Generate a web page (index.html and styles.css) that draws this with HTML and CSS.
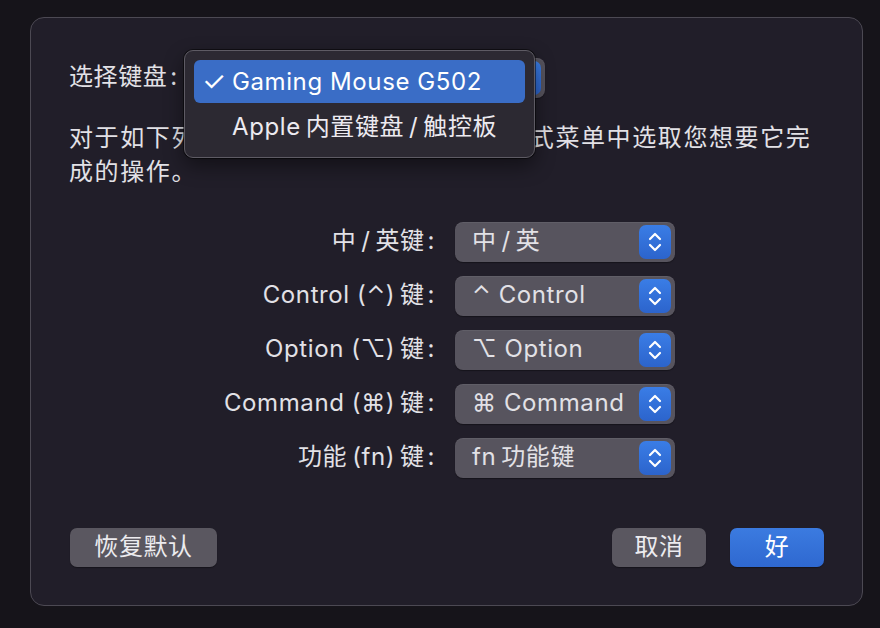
FILE: index.html
```html
<!DOCTYPE html>
<html lang="zh-CN">
<head>
    <meta charset="UTF-8">
    <meta name="viewport" content="width=device-width, initial-scale=1.0">
    <title>修饰键</title>
    <link rel="stylesheet" href="styles.css">
</head>
<body>

    <div class="dialog">
        <!-- 选择键盘 -->
        <div class="keyboard-row">
            <span class="keyboard-label">选择键盘&#8202;:</span>
            <div class="popup popup-wide">
                <span>Gaming Mouse G502</span>
                <span class="stepper">
                    <svg width="32" height="34" viewBox="0 0 32 34"><path d="M11 14 L16 9 L21 14 M11 20 L16 25 L21 20" fill="none" stroke="#fff" stroke-width="2.2" stroke-linecap="round" stroke-linejoin="round"/></svg>
                </span>
            </div>

            <!-- 弹出菜单 -->
            <div class="menu">
                <div class="menu-item selected"><span class="check">✓</span>Gaming Mouse G502</div>
                <div class="menu-item"><span class="check"></span>Apple&#8201;内置键盘&#8201;/&#8201;触控板</div>
            </div>
        </div>

        <p class="intro">对于如下列每个修饰键，请从旁边的弹出式菜单中选取您想要它完成的操作。</p>

        <!-- 修饰键列表 -->
        <div class="keys">
            <label>中&#8201;/&#8201;英键&#8202;:</label>
            <div class="popup"><span>中&#8201;/&#8201;英</span><span class="stepper"><svg width="32" height="34" viewBox="0 0 32 34"><path d="M11 14 L16 9 L21 14 M11 20 L16 25 L21 20" fill="none" stroke="#fff" stroke-width="2.2" stroke-linecap="round" stroke-linejoin="round"/></svg></span></div>

            <label>Control (⌃)&#8201;键&#8202;:</label>
            <div class="popup"><span>⌃ Control</span><span class="stepper"><svg width="32" height="34" viewBox="0 0 32 34"><path d="M11 14 L16 9 L21 14 M11 20 L16 25 L21 20" fill="none" stroke="#fff" stroke-width="2.2" stroke-linecap="round" stroke-linejoin="round"/></svg></span></div>

            <label>Option (⌥)&#8201;键&#8202;:</label>
            <div class="popup"><span>⌥ Option</span><span class="stepper"><svg width="32" height="34" viewBox="0 0 32 34"><path d="M11 14 L16 9 L21 14 M11 20 L16 25 L21 20" fill="none" stroke="#fff" stroke-width="2.2" stroke-linecap="round" stroke-linejoin="round"/></svg></span></div>

            <label>Command (⌘)&#8201;键&#8202;:</label>
            <div class="popup"><span>⌘ Command</span><span class="stepper"><svg width="32" height="34" viewBox="0 0 32 34"><path d="M11 14 L16 9 L21 14 M11 20 L16 25 L21 20" fill="none" stroke="#fff" stroke-width="2.2" stroke-linecap="round" stroke-linejoin="round"/></svg></span></div>

            <label>功能&#8201;(fn)&#8201;键&#8202;:</label>
            <div class="popup"><span>fn&#8201;功能键</span><span class="stepper"><svg width="32" height="34" viewBox="0 0 32 34"><path d="M11 14 L16 9 L21 14 M11 20 L16 25 L21 20" fill="none" stroke="#fff" stroke-width="2.2" stroke-linecap="round" stroke-linejoin="round"/></svg></span></div>
        </div>

        <!-- 按钮 -->
        <div class="actions">
            <button class="btn btn-restore">恢复默认</button>
            <div class="actions-right">
                <button class="btn">取消</button>
                <button class="btn btn-primary">好</button>
            </div>
        </div>
    </div>

</body>
</html>
```

FILE: styles.css
```css
body {
    margin: 0;
    background-color: #16141a;
    font-family: "Inter", "Noto Sans CJK SC", "DejaVu Sans", sans-serif;
    font-size: 24px;
    letter-spacing: 0.6px;
    color: #e2e1e6;
    height: 628px;
    overflow: hidden;
}
.dialog {
    box-sizing: border-box;
    width: 833px;
    height: 589px;
    margin: 17px 0 0 30px;
    padding: 40px 38px 0 38px;
    background-color: #211e29;
    border: 1px solid #4c4953;
    border-radius: 14px;
}
.keyboard-row {
    position: relative;
    display: flex;
    align-items: center;
    height: 40px;
    line-height: 1;
}
.keyboard-label {
    width: 116px;
    white-space: nowrap;
    padding-bottom: 2px;
}
.popup {
    box-sizing: border-box;
    display: flex;
    align-items: center;
    justify-content: space-between;
    height: 40px;
    width: 220px;
    padding: 0 4px 0 17px;
    background-color: #57545e;
    border-radius: 8px;
    box-shadow: 0 1px 1px rgba(0, 0, 0, 0.35), inset 0 1px 0 rgba(255, 255, 255, 0.06);
    white-space: nowrap;
    line-height: 1;
}
.popup > span:first-child {
    padding-bottom: 2px;
}
.popup-wide {
    width: 360px;
}
.stepper {
    display: flex;
    width: 32px;
    height: 34px;
    border-radius: 7px;
    background: linear-gradient(#3a7de6, #2c64cc);
}
.menu {
    position: absolute;
    left: 115px;
    top: -8px;
    box-sizing: border-box;
    width: 351px;
    padding: 9px;
    background-color: #2c2932;
    border: 1px solid #5e5b64;
    border-radius: 9px;
    box-shadow: 0 0 0 1px rgba(0, 0, 0, 0.5), 0 8px 20px rgba(0, 0, 0, 0.45);
}
.menu-item {
    display: flex;
    align-items: center;
    height: 43px;
    border-radius: 6px;
    white-space: nowrap;
    color: #eceaf0;
}
.menu-item + .menu-item {
    margin-top: 3px;
    height: 42px;
}
.menu-item.selected {
    background-color: #3a6dc6;
    color: #fff;
}
.check {
    width: 30px;
    padding-left: 8px;
    font-size: 27px;
}
.intro {
    margin: 23px 0 0 0;
    line-height: 34px;
    letter-spacing: 1.6px;
}
.keys {
    display: grid;
    grid-template-columns: 366px 220px;
    column-gap: 20px;
    row-gap: 14px;
    align-items: center;
    margin-top: 33px;
}
.keys label {
    text-align: right;
    white-space: nowrap;
    line-height: 1;
    padding-bottom: 2px;
}
.actions {
    display: flex;
    justify-content: space-between;
    margin-top: 50px;
    padding-left: 1px;
}
.actions-right {
    display: flex;
    gap: 24px;
}
.btn {
    height: 39px;
    width: 94px;
    padding: 0 0 2px 0;
    border: none;
    border-radius: 7px;
    background-color: #5a5760;
    color: #ecebef;
    font-family: inherit;
    font-size: 24px;
    letter-spacing: 0.6px;
    line-height: 1;
    box-shadow: 0 1px 1px rgba(0, 0, 0, 0.35);
}
.btn-restore {
    width: 147px;
}
.btn-primary {
    background: linear-gradient(#3b7be0, #2f68d0);
    color: #fff;
}
```
